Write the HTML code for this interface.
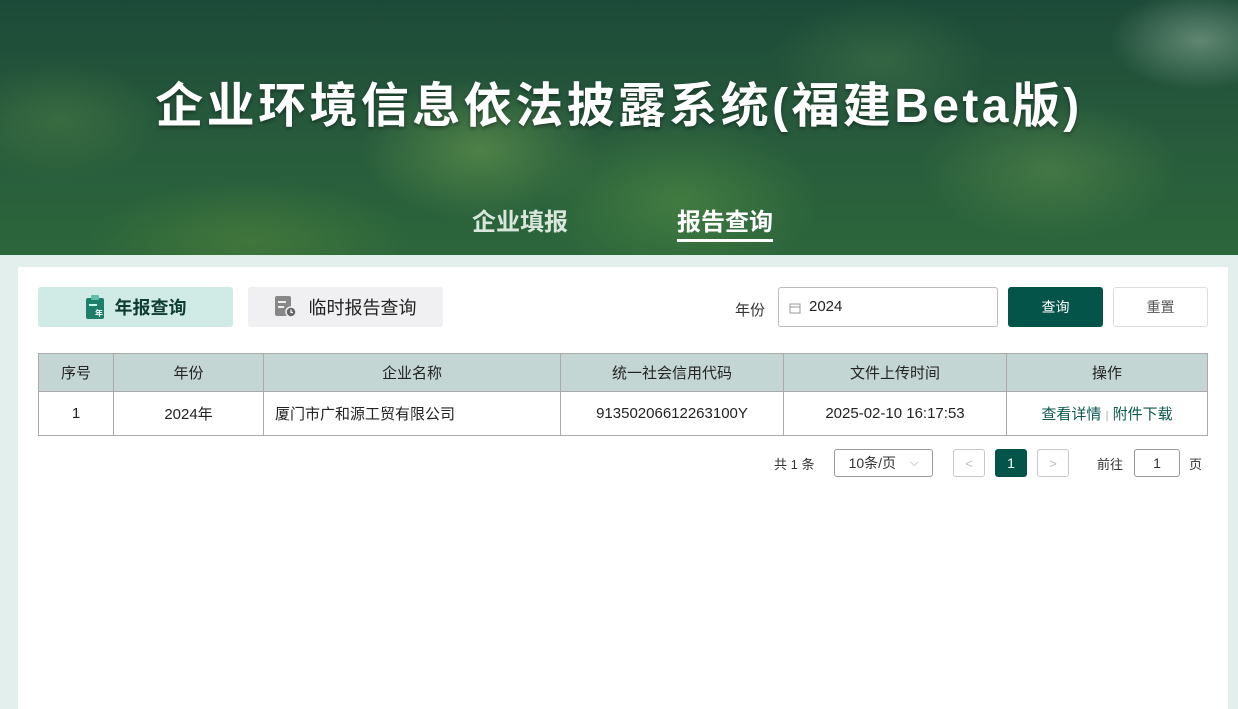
<!DOCTYPE html>
<html><head><meta charset="utf-8"><style>
*{margin:0;padding:0;box-sizing:border-box}
body{width:1238px;height:709px;overflow:hidden;font-family:"Liberation Sans","Noto Sans CJK SC",sans-serif;background:#e3efed;position:relative}
.hdr{position:absolute;left:0;top:0;width:1238px;height:255px;
background:
radial-gradient(ellipse 120px 70px at 480px 150px,rgba(110,160,80,.55),transparent),
radial-gradient(ellipse 140px 80px at 680px 200px,rgba(90,150,70,.5),transparent),
radial-gradient(ellipse 160px 60px at 250px 240px,rgba(90,140,60,.45),transparent),
radial-gradient(ellipse 130px 70px at 1050px 170px,rgba(100,150,80,.45),transparent),
radial-gradient(ellipse 100px 60px at 60px 120px,rgba(80,130,70,.45),transparent),
radial-gradient(ellipse 110px 60px at 880px 60px,rgba(80,130,80,.4),transparent),
radial-gradient(ellipse 90px 50px at 1200px 40px,rgba(160,190,170,.5),transparent),
linear-gradient(180deg,#1c4a38,#275a3c 50%,#2c663b);}
.title{position:absolute;left:0;width:1238px;top:66px;text-align:center;color:#fff;font-size:48px;font-weight:bold;letter-spacing:3.4px;text-shadow:0 2px 4px rgba(0,0,0,.4);white-space:nowrap}
.nav{position:absolute;top:202px;font-size:24px;font-weight:bold;color:#d8e6dc}
.nav.on{color:#fff;border-bottom:3px solid #fff;padding-bottom:2px}
.panel{position:absolute;left:18px;top:267px;width:1210px;height:442px;background:#fff}
.tab{position:absolute;top:287px;height:40px;border-radius:3px;font-size:18px;display:flex;align-items:center;justify-content:center}
.t1{left:38px;width:195px;background:#d0ebe6;color:#0f3d33;font-weight:bold}
.t2{left:248px;width:195px;background:#f0f0f2;color:#222}
.lbl{position:absolute;left:735px;top:299px;font-size:15px;color:#333}
.inp{position:absolute;left:778px;top:287px;width:220px;height:40px;border:1px solid #bbb;border-radius:3px;font-size:15px;color:#222;padding:10px 0 0 30px}
.btn{position:absolute;top:287px;width:95px;height:40px;border-radius:3px;font-size:14px;display:flex;align-items:center;justify-content:center}
table{position:absolute;left:38px;top:353px;width:1170px;border-collapse:collapse;font-size:15px;color:#222}
td,th{border:1px solid #aaa;text-align:center;font-weight:normal}
th{background:#c4d6d4;height:38px}
td{height:44px}
.pg{position:absolute;top:449px;height:28px;font-size:13px;color:#333;display:flex;align-items:center;justify-content:center}
.bx{border:1px solid #c8c8cc;border-radius:3px}
</style></head><body>
<div class="hdr"></div>
<div class="title">企业环境信息依法披露系统(福建Beta版)</div>
<div class="nav" style="left:472px">企业填报</div>
<div class="nav on" style="left:677px">报告查询</div>
<div class="panel"></div>
<div class="tab t1"><svg width="20" height="24" viewBox="0 0 20 24" style="margin-right:10px"><rect x="1" y="3" width="18" height="21" rx="2" fill="#1d7f6a"/><rect x="6" y="0" width="8" height="5" rx="1" fill="#5fc0aa"/><rect x="4" y="9" width="8" height="2" fill="#cfe"/><text x="10" y="21" font-size="8" fill="#fff" font-family="Noto Sans CJK SC">年</text></svg>年报查询</div>
<div class="tab t2"><svg width="22" height="22" viewBox="0 0 22 22" style="margin-right:12px"><rect x="0" y="0" width="16" height="20" rx="2" fill="#888"/><rect x="3" y="5" width="8" height="2" fill="#eee"/><rect x="3" y="10" width="6" height="2" fill="#eee"/><circle cx="16" cy="16" r="5" fill="#666" stroke="#f0f0f2" stroke-width="1.5"/><path d="M16 13.5v3h2" stroke="#fff" fill="none" stroke-width="1.2"/></svg>临时报告查询</div>
<div class="lbl">年份</div>
<div class="inp"><svg width="12" height="12" style="position:absolute;left:10px;top:14px" viewBox="0 0 12 12"><rect x="1" y="2" width="10" height="9" fill="none" stroke="#999"/><path d="M1 5h10" stroke="#999"/></svg>2024</div>
<div class="btn" style="left:1008px;background:#04544a;color:#fff">查询</div>
<div class="btn" style="left:1113px;border:1px solid #ddd;color:#555">重置</div>
<table><tr><th style="width:75px">序号</th><th style="width:150px">年份</th><th style="width:297px">企业名称</th><th style="width:223px">统一社会信用代码</th><th style="width:223px">文件上传时间</th><th>操作</th></tr>
<tr><td>1</td><td>2024年</td><td style="text-align:left;padding-left:11px">厦门市广和源工贸有限公司</td><td>91350206612263100Y</td><td>2025-02-10 16:17:53</td><td style="color:#0b5a4c">查看详情 <span style="color:#aaa;font-size:11px">|</span> 附件下载</td></tr></table>
<div class="pg" style="left:774px">共 1 条</div>
<div class="pg bx" style="left:834px;width:99px;border-color:#999;font-size:14px">10条/页 <span style="color:#999;margin-left:14px;font-size:11px">⌵</span></div>
<div class="pg bx" style="left:953px;width:32px;color:#bbb">&lt;</div>
<div class="pg" style="left:995px;width:32px;background:#04544a;color:#fff;border-radius:3px;font-size:14px">1</div>
<div class="pg bx" style="left:1037px;width:32px;color:#bbb">&gt;</div>
<div class="pg" style="left:1097px">前往</div>
<div class="pg bx" style="left:1134px;width:46px;border-color:#999;font-size:14px">1</div>
<div class="pg" style="left:1189px">页</div>
</body></html>
